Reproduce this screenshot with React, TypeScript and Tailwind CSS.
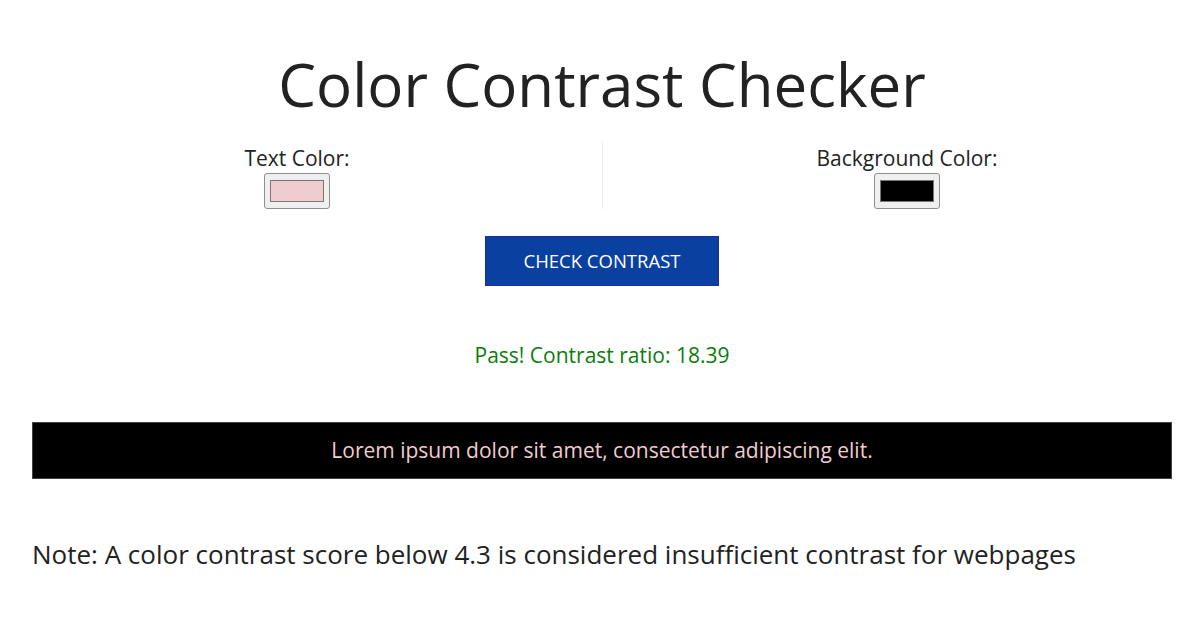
const swatchFrame =
  "flex h-[36px] w-[66px] items-center justify-center rounded-[3px] border border-[#8f8f8f] bg-[#efefef]";

function ColorField({
  label,
  color,
  width,
}: {
  label: string;
  color: string;
  width: string;
}) {
  return (
    <div className={`flex shrink-0 flex-col items-center pt-[2px] ${width}`}>
      <label className="text-[21px] leading-[29px] text-[#222]">{label}</label>
      <div className={swatchFrame}>
        <div
          className="h-[22px] w-[54px] border border-[#777]"
          style={{ backgroundColor: color }}
        />
      </div>
    </div>
  );
}

export default function App() {
  return (
    <div
      className="min-h-[618px] bg-white pl-[32px] pr-[28px] text-[#222]"
      style={{ fontFamily: '"Open Sans", sans-serif' }}
    >
      <h1 className="pt-[44px] text-center text-[60px] leading-[80px] text-[#222]">
        Color Contrast Checker
      </h1>
      <div className="-ml-[32px] -mr-[28px] mt-[18px] flex items-stretch">
        <ColorField label="Text Color:" color="#f0ccd0" width="w-[594px]" />
        <div className="ml-[8px] mr-[11px] w-px shrink-0 bg-[#eeeeee]" />
        <ColorField label="Background Color:" color="#000000" width="w-[586px]" />
      </div>
      <div className="mt-[27px] flex justify-center">
        <button className="h-[50px] w-[234px] border border-[#1a2e9c] bg-[#0a40a0] text-[18.5px] uppercase text-white">
          Check Contrast
        </button>
      </div>
      <p className="mt-[53px] text-center text-[21px] leading-[32px] text-[#0a7d0a]">
        Pass! Contrast ratio: 18.39
      </p>
      <div className="mt-[51px] flex h-[57px] items-center justify-center border border-[#444] bg-black text-[21px] text-[#f0ccd0]">
        Lorem ipsum dolor sit amet, consectetur adipiscing elit.
      </div>
      <p className="mt-[56px] text-[26px] leading-[39px] text-[#222]">
        Note: A color contrast score below 4.3 is considered insufficient contrast for webpages
      </p>
    </div>
  );
}
